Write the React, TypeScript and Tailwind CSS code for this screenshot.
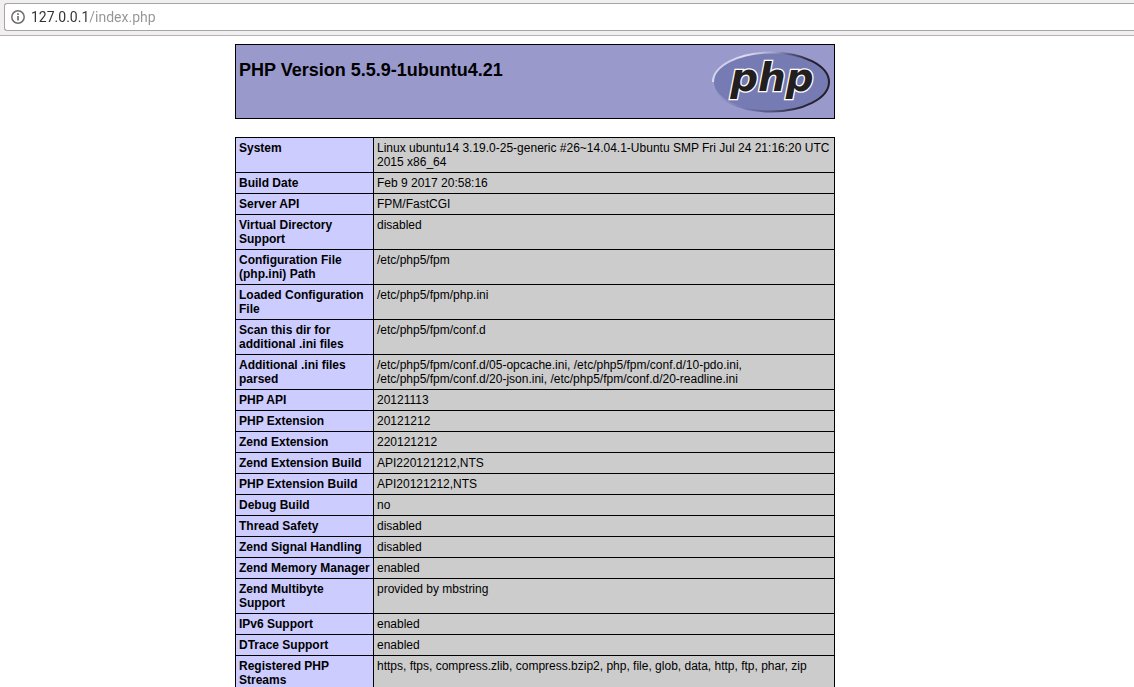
const rows: [string, string][] = [
  ["System", "Linux ubuntu14 3.19.0-25-generic #26~14.04.1-Ubuntu SMP Fri Jul 24 21:16:20 UTC 2015 x86_64"],
  ["Build Date", "Feb 9 2017 20:58:16"],
  ["Server API", "FPM/FastCGI"],
  ["Virtual Directory Support", "disabled"],
  ["Configuration File (php.ini) Path", "/etc/php5/fpm"],
  ["Loaded Configuration File", "/etc/php5/fpm/php.ini"],
  ["Scan this dir for additional .ini files", "/etc/php5/fpm/conf.d"],
  [
    "Additional .ini files parsed",
    "/etc/php5/fpm/conf.d/05-opcache.ini, /etc/php5/fpm/conf.d/10-pdo.ini, /etc/php5/fpm/conf.d/20-json.ini, /etc/php5/fpm/conf.d/20-readline.ini",
  ],
  ["PHP API", "20121113"],
  ["PHP Extension", "20121212"],
  ["Zend Extension", "220121212"],
  ["Zend Extension Build", "API220121212,NTS"],
  ["PHP Extension Build", "API20121212,NTS"],
  ["Debug Build", "no"],
  ["Thread Safety", "disabled"],
  ["Zend Signal Handling", "disabled"],
  ["Zend Memory Manager", "enabled"],
  ["Zend Multibyte Support", "provided by mbstring"],
  ["IPv6 Support", "enabled"],
  ["DTrace Support", "enabled"],
  ["Registered PHP Streams", "https, ftps, compress.zlib, compress.bzip2, php, file, glob, data, http, ftp, phar, zip"],
];

function InfoIcon() {
  return (
    <svg className="size-4 shrink-0" viewBox="0 0 16 16" fill="none" aria-hidden="true">
      <circle cx="8" cy="8" r="6.2" stroke="#6e6e6e" strokeWidth="1.5" />
      <path d="M8 7v4.5M8 4.3v1.6" stroke="#6e6e6e" strokeWidth="1.7" />
    </svg>
  );
}

function PhpLogo() {
  return (
    <svg className="h-[67px] w-[120px] shrink-0" viewBox="0 0 120 67" role="img" aria-label="PHP logo">
      <defs>
        <linearGradient id="rim" x1="0" y1="0.2" x2="1" y2="0.5">
          <stop offset="0" stopColor="#b0b2da" />
          <stop offset="0.22" stopColor="#dedff0" />
          <stop offset="0.42" stopColor="#a4a6ce" />
          <stop offset="0.58" stopColor="#55567c" />
          <stop offset="0.8" stopColor="#23202c" />
          <stop offset="1" stopColor="#231f28" />
        </linearGradient>
        <linearGradient id="rimLower" x1="0" y1="0" x2="1" y2="0">
          <stop offset="0" stopColor="#9a9dcd" />
          <stop offset="0.3" stopColor="#7175ab" />
          <stop offset="0.5" stopColor="#53557f" />
          <stop offset="0.75" stopColor="#2a2737" />
          <stop offset="1" stopColor="#231f28" />
        </linearGradient>
      </defs>
      <ellipse cx="60" cy="34" rx="58" ry="29.5" fill="#777bb3" />
      <path d="M2 34A58 29.5 0 0 1 118 34" fill="none" stroke="url(#rim)" strokeWidth="2" />
      <path d="M2 34A58 29.5 0 0 0 118 34" fill="none" stroke="url(#rimLower)" strokeWidth="2" />
      <text
        x="61"
        y="43"
        textAnchor="middle"
        fontFamily="'DejaVu Sans', sans-serif"
        fontSize="39"
        fontWeight="700"
        fontStyle="italic"
        fill="#231f20"
        stroke="#ffffff"
        strokeWidth="2.6"
        strokeLinejoin="miter"
        paintOrder="stroke"
      >
        php
      </text>
    </svg>
  );
}

export default function App() {
  return (
    <div className="min-h-screen bg-white text-black">
      <header className="border-b border-[#b3b1b1] bg-[#f1eff0] pt-[3px] pb-1 pl-1">
        <label className="flex h-7 items-center gap-[5px] rounded-l-[3px] border border-r-0 border-[#a6a6a6] bg-white pl-[5px]">
          <InfoIcon />
          <input
            type="text"
            aria-label="Address"
            defaultValue="127.0.0.1/index.php"
            spellCheck={false}
            className="min-w-0 flex-1 bg-[linear-gradient(to_right,#303030_57px,#949494_57px)] bg-clip-text font-[Roboto,sans-serif] text-[14px] leading-5 text-transparent outline-none"
          />
        </label>
      </header>

      <main className="pt-2 pr-16 font-['Liberation_Sans',Arial,sans-serif]">
        <div className="mx-auto flex w-full max-w-[600px] flex-col gap-[18px]">
          <section className="flex items-start justify-between border border-black bg-[#9999cc] p-[3px]">
            <h1 className="pt-3 text-[18px] leading-5 font-bold">PHP Version 5.5.9-1ubuntu4.21</h1>
            <PhpLogo />
          </section>

          <table className="w-full border-collapse text-left text-[12px] leading-[14px]">
            <tbody>
              {rows.map(([name, value]) => (
                <tr key={name} className="align-top">
                  <th scope="row" className="w-[138px] border border-black bg-[#ccccff] p-[3px] font-bold">
                    {name}
                  </th>
                  <td className="border border-black bg-[#cccccc] p-[3px]">{value}</td>
                </tr>
              ))}
            </tbody>
          </table>
        </div>
      </main>
    </div>
  );
}
